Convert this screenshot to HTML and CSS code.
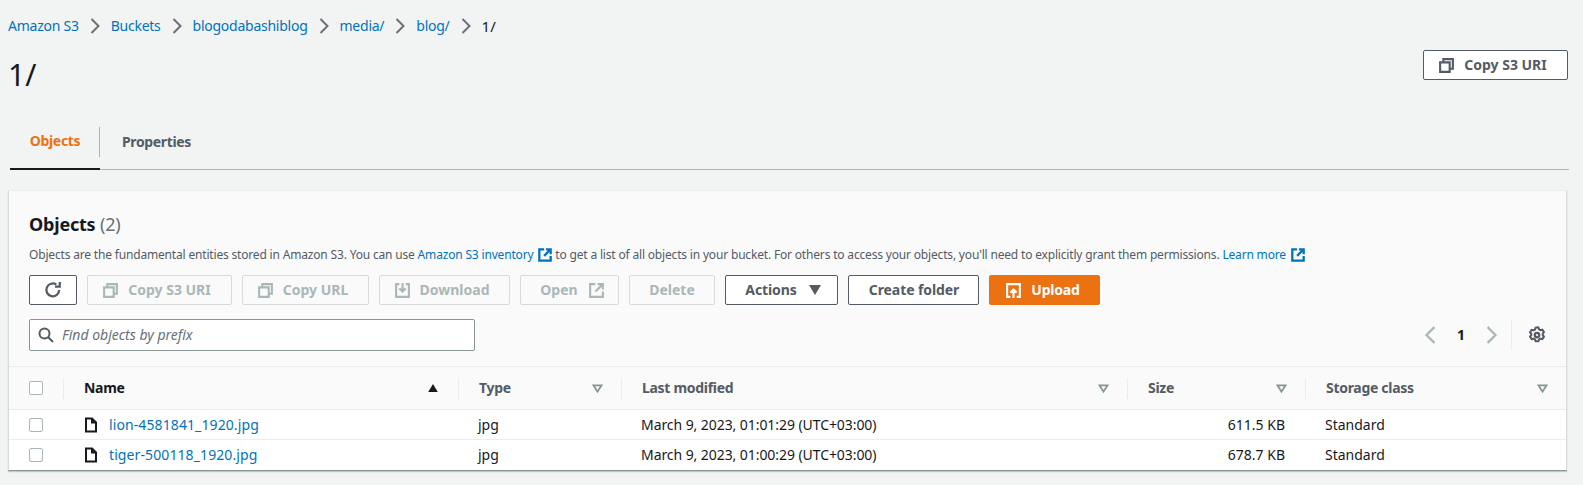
FILE: index.html
```html
<!DOCTYPE html>
<html lang="en">
<head>
<meta charset="utf-8">
<title>1/ - S3 bucket</title>
<link rel="stylesheet" href="styles.css">
</head>
<body>
<svg class="sprites" width="0" height="0" aria-hidden="true">
  <symbol id="i-copy" viewBox="0 0 16 16"><path d="M5 5V2h9v9h-3M2 5h9v9H2z" fill="none" stroke="currentColor" stroke-width="2"/></symbol>
  <symbol id="i-ext" viewBox="0 0 16 16"><path d="M7 2H2v12h12V9M9 2h5v5M14 2L7 9" fill="none" stroke="currentColor" stroke-width="2"/></symbol>
  <symbol id="i-ext-bold" viewBox="0 0 16 16"><path d="M7 1.5H1.5v13h13V9M9 1.5h5.5V7M14.5 1.5L7 9" fill="none" stroke="currentColor" stroke-width="2.6"/></symbol>
  <symbol id="i-chev" viewBox="0 0 16 16"><path d="M4.5 1l7 7-7 7" fill="none" stroke="currentColor" stroke-width="2"/></symbol>
  <symbol id="i-file" viewBox="0 0 16 16"><path d="M3 1.5h6l4 4v9H3zM9 1.5v4h4" fill="none" stroke="currentColor" stroke-width="2"/></symbol>
  <symbol id="i-sort" viewBox="0 0 12 10"><path d="M1.5 1.5h9L6 8.5z" fill="none" stroke="currentColor" stroke-width="2"/></symbol>
</svg>

<nav class="crumbs">
  <a href="#">Amazon S3</a><svg class="crumb-sep"><use href="#i-chev"/></svg>
  <a href="#">Buckets</a><svg class="crumb-sep"><use href="#i-chev"/></svg>
  <a href="#">blogodabashiblog</a><svg class="crumb-sep"><use href="#i-chev"/></svg>
  <a href="#">media/</a><svg class="crumb-sep"><use href="#i-chev"/></svg>
  <a href="#">blog/</a><svg class="crumb-sep"><use href="#i-chev"/></svg>
  <span class="crumb-current">1/</span>
</nav>

<header class="page-head">
  <h1>1/</h1>
  <button class="btn btn-head"><svg class="ico"><use href="#i-copy"/></svg>Copy S3 URI</button>
</header>

<div class="tabs">
  <a class="tab tab-active" href="#">Objects</a>
  <a class="tab" href="#">Properties</a>
</div>

<section class="card">
  <div class="card-top">
    <h2>Objects <span class="count">(2)</span></h2>
    <p class="desc">Objects are the fundamental entities stored in Amazon S3. You can use <a href="#">Amazon S3 inventory<svg class="ico-ext"><use href="#i-ext-bold"/></svg></a> to get a list of all objects in your bucket. For others to access your objects, you'll need to explicitly grant them permissions. <a href="#">Learn more<svg class="ico-ext"><use href="#i-ext-bold"/></svg></a></p>
    <div class="actions">
      <button class="btn btn-refresh" aria-label="Refresh"><svg class="ico-lg" viewBox="0 0 16 16"><path d="M13.5 8A5.7 5.7 0 1 1 11 3.2" fill="none" stroke="currentColor" stroke-width="2"/><path d="M14 .8V5H9.8" fill="none" stroke="currentColor" stroke-width="2"/></svg></button>
      <button class="btn btn-off w-uri"><svg class="ico"><use href="#i-copy"/></svg>Copy S3 URI</button>
      <button class="btn btn-off w-url"><svg class="ico"><use href="#i-copy"/></svg>Copy URL</button>
      <button class="btn btn-off w-dl"><svg class="ico" viewBox="0 0 16 16"><path d="M5 2H2v12h12V2h-3M8 1v8M5 6l3 3 3-3" fill="none" stroke="currentColor" stroke-width="2"/></svg>Download</button>
      <button class="btn btn-off w-open">Open<svg class="ico ico-after"><use href="#i-ext"/></svg></button>
      <button class="btn btn-off w-del">Delete</button>
      <button class="btn w-act">Actions<svg class="caret" viewBox="0 0 12 10"><path d="M0 0h12L6 10z" fill="currentColor"/></svg></button>
      <button class="btn w-new">Create folder</button>
      <button class="btn btn-primary w-up"><svg class="ico" viewBox="0 0 16 16"><path d="M5 14H2V2h12v12h-3M8 15V7M5 10l3-3 3 3" fill="none" stroke="currentColor" stroke-width="2"/></svg>Upload</button>
    </div>
    <div class="filter-row">
      <label class="search">
        <svg class="ico-search" viewBox="0 0 16 16"><circle cx="6.5" cy="6.5" r="5" fill="none" stroke="currentColor" stroke-width="2"/><path d="M10 10l5 5" stroke="currentColor" stroke-width="2"/></svg>
        <span class="placeholder">Find objects by prefix</span>
      </label>
      <div class="pager">
        <svg class="pg-arrow" viewBox="0 0 16 16"><path d="M11 1L4 8l7 7" fill="none" stroke="currentColor" stroke-width="2"/></svg>
        <span class="pg-num">1</span>
        <svg class="pg-arrow" viewBox="0 0 16 16"><path d="M5 1l7 7-7 7" fill="none" stroke="currentColor" stroke-width="2"/></svg>
        <span class="pg-div"></span>
        <svg class="pg-gear" viewBox="0 0 16 16"><circle cx="8" cy="8" r="2" fill="none" stroke="currentColor" stroke-width="2"/><path d="M8 1.2l1.3.2.5 1.6 1.3.7 1.6-.5 1.5 2.2-1.1 1.3v1.5l1.1 1.3-1.5 2.2-1.6-.5-1.3.7-.5 1.6H6.7l-.5-1.6-1.3-.7-1.6.5-1.5-2.2 1.1-1.3V6.9L1.8 5.6l1.5-2.2 1.6.5 1.3-.7.5-1.6z" fill="none" stroke="currentColor" stroke-width="1.8" stroke-linejoin="round"/></svg>
      </div>
    </div>
  </div>

  <table class="objects">
    <colgroup><col class="c-check"><col class="c-name"><col class="c-type"><col class="c-mod"><col class="c-size"><col></colgroup>
    <thead>
      <tr>
        <th><span class="th-in"><span class="box box-head"></span></span></th>
        <th class="th-on"><span class="th-in">Name<svg class="sort-asc" viewBox="0 0 12 10"><path d="M0 10L6 0l6 10z" fill="currentColor"/></svg></span></th>
        <th><span class="th-in">Type<svg class="sort"><use href="#i-sort"/></svg></span></th>
        <th><span class="th-in">Last modified<svg class="sort"><use href="#i-sort"/></svg></span></th>
        <th><span class="th-in">Size<svg class="sort"><use href="#i-sort"/></svg></span></th>
        <th><span class="th-in th-last">Storage class<svg class="sort"><use href="#i-sort"/></svg></span></th>
      </tr>
    </thead>
    <tbody>
      <tr>
        <td class="td-check"><span class="box"></span></td>
        <td><a class="file" href="#"><svg class="ico-file"><use href="#i-file"/></svg>lion-4581841_1920.jpg</a></td>
        <td>jpg</td>
        <td class="date">March 9, 2023, 01:01:29 (UTC+03:00)</td>
        <td class="num">611.5 KB</td>
        <td>Standard</td>
      </tr>
      <tr>
        <td class="td-check"><span class="box"></span></td>
        <td><a class="file" href="#"><svg class="ico-file"><use href="#i-file"/></svg>tiger-500118_1920.jpg</a></td>
        <td>jpg</td>
        <td class="date">March 9, 2023, 01:00:29 (UTC+03:00)</td>
        <td class="num">678.7 KB</td>
        <td>Standard</td>
      </tr>
    </tbody>
  </table>
</section>
</body>
</html>
```

FILE: styles.css
```css
* { box-sizing: border-box; }
html, body { margin: 0; padding: 0; }
body {
  height: 485px;
  overflow: hidden;
  background: #f2f3f3;
  color: #16191f;
  font: 14px/20px "Noto Sans", "Liberation Sans", sans-serif;
}
a { color: #0073bb; text-decoration: none; }
.sprites { position: absolute; }

/* breadcrumbs */
.crumbs { display: flex; align-items: center; height: 20px; margin: 16px 0 0 8px; letter-spacing: -0.25px; }
.crumb-sep { width: 16px; height: 16px; margin: 0 8px; color: #687078; }
.crumb-current { color: #16191f; font-size: 15px; letter-spacing: 0; }

/* page header */
.page-head { display: flex; justify-content: space-between; align-items: flex-start; padding: 14px 15px 0 8px; height: 91px; }
h1 { margin: 7px 0 0; font-size: 30px; line-height: 36px; font-weight: 400; }

/* buttons */
.btn {
  display: inline-flex; align-items: center; justify-content: center;
  height: 30px; padding: 0; background: #fff;
  border: 1px solid #545b64; border-radius: 2px;
  color: #545b64; font: 700 14px/20px "Noto Sans", "Liberation Sans", sans-serif;
}
.btn-head { width: 145px; padding-right: 6px; }
.btn-off { background: transparent; border-color: #d5dbdb; color: #aab7b8; }
.btn-primary { background: #ec7211; border-color: #ec7211; color: #fff; }
.btn-refresh { width: 48px; }
.ico { width: 17px; height: 17px; margin-right: 9px; flex: none; }
.ico-after { margin: 0 0 0 10px; }
.ico-lg { width: 18px; height: 18px; }
.caret { width: 12px; height: 10px; margin-left: 12px; }
.w-uri { width: 145px; padding-right: 6px; }
.w-url { width: 127px; padding-right: 6px; }
.w-dl { width: 131px; padding-right: 6px; }
.w-open { width: 99px; padding-left: 6px; }
.w-del { width: 86px; }
.w-act { width: 113px; padding-left: 3px; letter-spacing: -0.1px; }
.w-new { width: 131px; padding-left: 1px; letter-spacing: -0.1px; }
.w-up { width: 111px; padding-right: 4px; letter-spacing: -0.2px; }

/* tabs */
.tabs { display: flex; height: 43px; margin: 0 14px 0 10px; border-bottom: 1px solid #aab7b8; }
.tab { display: flex; align-items: center; justify-content: center; height: 43px; font-weight: 700; color: #545b64; padding-bottom: 14px; letter-spacing: -0.35px; }
.tab:first-child { width: 90px; color: #ec7211; border-bottom: 2px solid #16191f; position: relative; }
.tab:first-child::after { content: ""; position: absolute; right: 0; top: 0; height: 30px; border-right: 1px solid #aab7b8; }
.tab:last-child { width: 113px; }

/* card */
.card {
  margin: 20px 16px 0 8px; background: #fff;
  border: 1px solid #d5dbdb; border-top-color: #eaeded; border-bottom-color: #879596;
  box-shadow: 0 1px 1px rgba(0, 28, 36, .2);
}
.card-top { height: 175px; padding: 21px 20px 0 20px; background: #fafafa; }
h2 { margin: 0; font-size: 18px; line-height: 24px; font-weight: 700; letter-spacing: -0.2px; }
.count { font-weight: 400; color: #687078; }
.desc { margin: 11px 0 0; font-size: 12px; line-height: 16px; color: #545b64; letter-spacing: -0.175px; white-space: nowrap; }
.ico-ext { width: 14px; height: 14px; margin-left: 5px; vertical-align: -3px; }
.actions { display: flex; gap: 10px; margin-top: 12px; }
.filter-row { display: flex; justify-content: space-between; align-items: center; margin-top: 14px; }
.search {
  display: flex; align-items: center; width: 446px; height: 32px; padding-left: 8px;
  background: #fff; border: 1px solid #879596; border-radius: 2px; color: #545b64;
}
.ico-search { width: 16px; height: 16px; margin-right: 8px; }
.placeholder { font-style: italic; color: #687078; }
.pager { display: flex; align-items: center; height: 30px; }
.pg-arrow { width: 18px; height: 18px; color: #aab7b8; }
.pg-num { width: 42px; text-align: center; font-weight: 700; font-size: 14px; }
.pg-div { width: 1px; height: 30px; background: #eaeded; margin: 0 16px 0 11px; }
.pg-gear { width: 18px; height: 18px; color: #545b64; }

/* table */
.objects { width: 100%; border-collapse: collapse; table-layout: fixed; border-top: 1px solid #eaeded; }
.c-check { width: 55px; }
.c-name { width: 395px; }
.c-type { width: 163px; }
.c-mod { width: 506px; }
.c-size { width: 178px; }
thead th { height: 43px; padding: 0; background: #fafafa; border-bottom: 1px solid #eaeded; font-weight: 700; color: #545b64; text-align: left; letter-spacing: -0.3px; }
thead th.th-on { color: #16191f; }
.th-in { display: flex; align-items: center; justify-content: space-between; height: 21px; padding: 0 18px 0 20px; border-right: 1px solid #eaeded; }
th:first-child .th-in { padding: 0 0 0 20px; }
.th-on .th-in { padding-right: 19px; }
.th-last { border-right: 0; padding-right: 18px; }
.sort { width: 11px; height: 9px; color: #879596; }
.sort-asc { width: 12px; height: 8px; color: #16191f; }
tbody td { height: 30px; padding: 0 21px 0 19px; background: #fff; border-bottom: 1px solid #eaeded; white-space: nowrap; }
tbody tr:last-child td { border-bottom: 0; }
tbody td.td-check { padding: 0 0 0 20px; }
.date { letter-spacing: -0.07px; }
.num { text-align: right; }
.box { display: block; width: 14px; height: 14px; border: 1px solid #aab7b8; border-radius: 2px; background: #fff; }
.file { display: flex; align-items: center; letter-spacing: 0.1px; }
.ico-file { width: 16px; height: 16px; margin-right: 10px; color: #16191f; flex: none; }
```
